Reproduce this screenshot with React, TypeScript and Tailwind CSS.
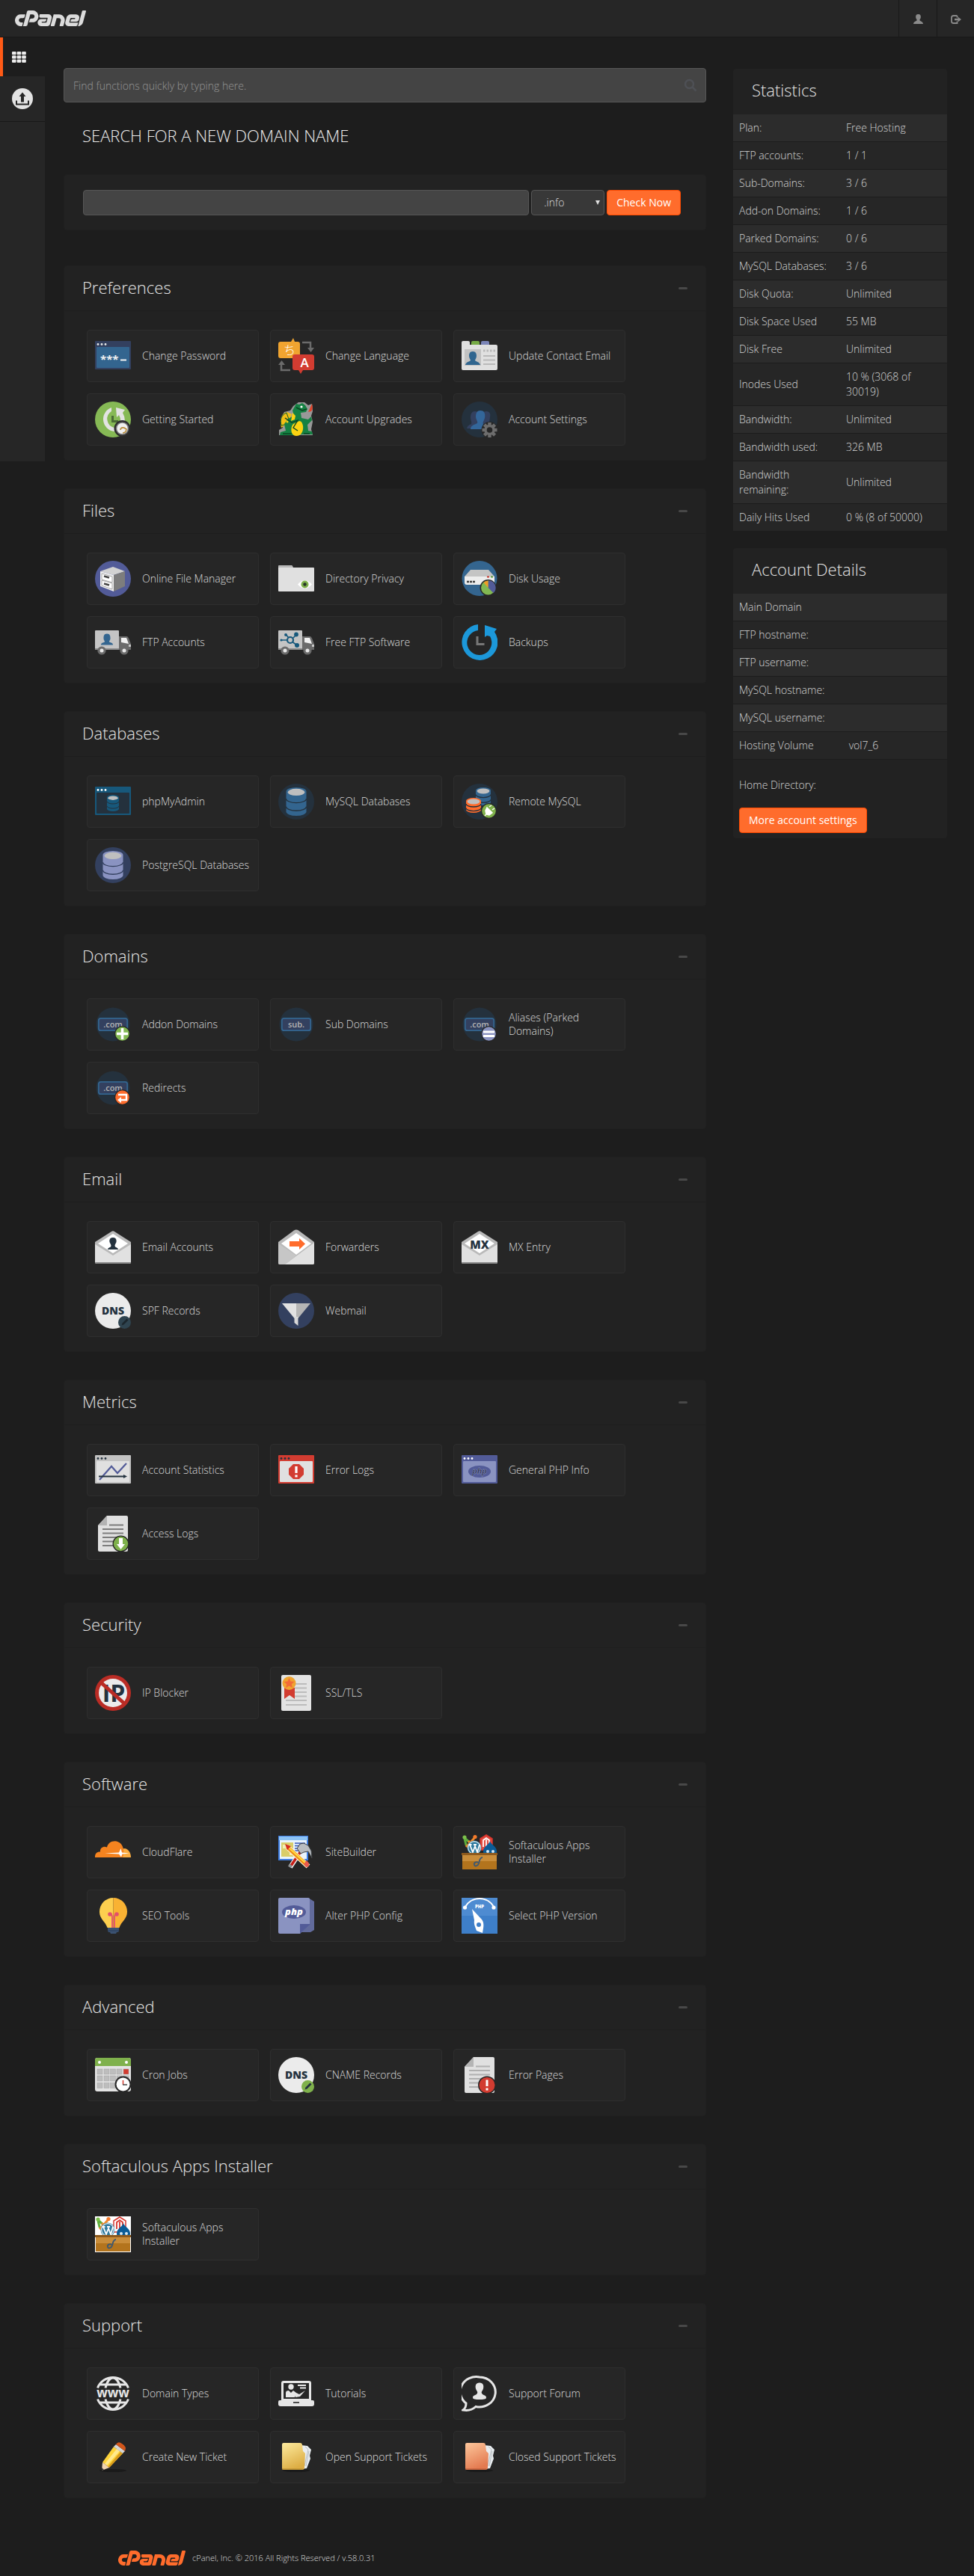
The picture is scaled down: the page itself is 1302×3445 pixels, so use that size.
import React, { useState } from "react";
import { SiCpanel } from "react-icons/si";

type Item = { label: string; icon: React.ReactNode };

const FONT = "'Open Sans', sans-serif";

function Ico({ children }: { children: React.ReactNode }) {
  return (
    <svg viewBox="0 0 48 48" className="size-12 shrink-0" aria-hidden="true" style={{ fontFamily: FONT }}>
      {children}
    </svg>
  );
}

function Disc({ fill }: { fill: string }) {
  return <circle cx="24" cy="24" r="24" fill={fill} />;
}

function Db({ x, y, w, h, fill, gap }: { x: number; y: number; w: number; h: number; fill: string; gap: string }) {
  const r = w / 2;
  const e = w / 5;
  const band = (t: number) => `M${x} ${y + t}a${r} ${e} 0 0 0 ${w} 0`;
  return (
    <g>
      <path d={`M${x} ${y + e}a${r} ${e} 0 0 1 ${w} 0v${h - 2 * e}a${r} ${e} 0 0 1 ${-w} 0z`} fill={fill} />
      <path d={`${band(h * 0.4)}${band(h * 0.68)}`} fill="none" stroke={gap} strokeWidth={w > 18 ? 1.3 : 1} />
      <ellipse cx={x + r} cy={y + e + 1} rx={r * 0.84} ry={e * 0.85} fill="#bfbfbf" />
    </g>
  );
}

function Window({ frame, inner, dots, children }: { frame: string; inner: string; dots: string; children: React.ReactNode }) {
  return (
    <Ico>
      <rect y="4" width="48" height="38" rx="1" fill={frame} />
      <rect x="2" y="12" width="44" height="28" rx="1" fill={inner} />
      <circle cx="4" cy="8.500" r="1.400" fill={dots} />
      <circle cx="9" cy="8.500" r="1.400" fill={dots} />
      <circle cx="14" cy="8.500" r="1.400" fill={dots} />
      {children}
    </Ico>
  );
}

function Truck({ children }: { children: React.ReactNode }) {
  return (
    <Ico>
      <path d="M1 8h30a1 1 0 0 1 1 1v25H0V9a1 1 0 0 1 1-1z" fill="#c4c4c4" />
      <path d="M32 16h10c2 0 3 2 4 5l2 5v8H32z" fill="#6b6b6b" />
      <path d="M35 18h7l3 8-10-2z" fill="#f1f1f1" />
      <path d="M45 27h3v3h-3z" fill="#c8c8c8" />
      <path d="M0 32h32v2H0z" fill="#8f8f8f" />
      {[9, 39].map((cx) => (
        <g key={cx}>
          <circle cx={cx} cy="35" r="5.600" fill="#6b6b6b" />
          <circle cx={cx} cy="35" r="2.500" fill="#e8e8e8" />
        </g>
      ))}
      {children}
    </Ico>
  );
}

function DomainBadge({ text, children }: { text: string; children?: React.ReactNode }) {
  return (
    <Ico>
      <circle cx="24" cy="24" r="22.500" fill="#24313d" />
      <rect x="4.800" y="15.800" width="38.400" height="16.400" rx="3" fill="#33405f" stroke="#33658f" strokeWidth="1.800" />
      <text x="24" y="28" textAnchor="middle" fontSize="11" fontWeight="600" fill="#b4b4b4">{text}</text>
      {children}
    </Ico>
  );
}

function Envelope({ children }: { children: React.ReactNode }) {
  return (
    <Ico>
      <path d="M0 17 22 3q2-1.500 4 0L48 17v26q0 2-2 2H2q-2 0-2-2z" fill="#b9b9b9" />
      <path d="M0 20l24 15 24-15v24q0 2-2 2H2q-2 0-2-2z" fill="#e1e1e1" />
      <path d="M4 19 24 6l20 13-20 13z" fill="#fff" />
      <path d="M0 44q0 2 2 2h44q2 0 2-2z" fill="#8a8a8a" />
      {children}
    </Ico>
  );
}

function Dns({ badge, mark }: { badge: string; mark: string }) {
  return (
    <Ico>
      <Disc fill="#ebebeb" />
      <text x="24" y="28.500" textAnchor="middle" fontSize="14" fontWeight="800" fill="#24323e">DNS</text>
      <circle cx="39.500" cy="39.500" r="8.500" fill={badge} />
      <path d="M35.500 43.500l1-3 6-6 2 2-6 6z" fill={mark} />
    </Ico>
  );
}

function Page({ line, children }: { line: string; children: React.ReactNode }) {
  return (
    <Ico>
      <path d="M16 0h26q2 0 2 2v44q0 2-2 2H6q-2 0-2-2V13z" fill="#e0e0e0" />
      <path d="M16 0v13H4z" fill="#b4b4b4" />
      <path d="M19 12.500h19M10 18h28M10 23.500h28M10 29h28M10 34.500h28M10 40h28" stroke={line} strokeWidth="2" />
      {children}
    </Ico>
  );
}

function CmsBox({ white }: { white?: boolean }) {
  return (
    <Ico>
      {white && <rect width="48" height="48" fill="#fff" />}
      <path d="M4 5l7 6 4 6M4 6l2 8 5 5" stroke="#5fae3d" strokeWidth="3" fill="none" />
      <path d="M18 4l-7 8-5 5M9 9l8 8" stroke="#f08a2b" strokeWidth="3" fill="none" />
      <circle cx="4" cy="4" r="2.600" fill="#7cc04b" />
      <circle cx="18" cy="3.500" r="2.600" fill="#f47a2c" />
      <path d="M25 6l8-5 8 5v15H25z" fill={white ? "#fff" : "#e04a3f"} stroke="#d8342c" strokeWidth="1.500" />
      <path d="M29 17V8l4-3 4 3v9M33 7v10" stroke={white ? "#d8342c" : "#fff"} strokeWidth="1.800" fill="none" />
      <circle cx="17" cy="18" r="9.500" fill="#2f7a9e" />
      <circle cx="17" cy="18" r="8.300" fill="none" stroke="#e8f2f7" strokeWidth="1.200" />
      <path d="M11 14l4 10 3-8 3 8 3-10M9.500 14h4M16 14h4" stroke="#fff" strokeWidth="1.800" fill="none" />
      <path d="M38 9c1 5 9 7 9 14 0 5-4 7-9 7s-9-2-9-7c0-7 8-9 9-14z" fill="#0b5c97" />
      <circle cx="35" cy="23" r="2" fill="#d7e9f5" />
      <circle cx="42" cy="23" r="2" fill="#d7e9f5" />
      <path d="M1 26h46v21H1z" fill="#c98d3a" />
      <path d="M1 36h46v11H1z" fill="#b3741d" />
      <path d="M0 25h48v3H0z" fill="#8e5a1d" />
      <path d="M28 31c-4 0-4 5-5 8s-5 5-6 2 3-5 5-3" stroke="#3b5873" strokeWidth="1.800" fill="none" />
    </Ico>
  );
}

function Folder({ id, a, b, c }: { id: string; a: string; b: string; c: string }) {
  return (
    <Ico>
      <defs>
        <linearGradient id={id} x1="0" y1="0" x2="0.400" y2="1">
          <stop offset="0" stopColor={a} />
          <stop offset="1" stopColor={b} />
        </linearGradient>
      </defs>
      <ellipse cx="24" cy="42" rx="18" ry="2" fill="#1a1a1a" />
      <path d="M30 8l9 1 5 5-2 8 1 4-5 13-8 1z" fill="#e9edf0" />
      <path d="M36 10l4 4-2 8-3 14M41 16l-4 20" stroke="#b8bec2" strokeWidth="1" fill="none" />
      <path d="M7 5h22q3 0 3 3l1 8 3 3-1 19q0 3-3 3H7q-2 0-2-2V7q0-2 2-2z" fill={`url(#${id})`} />
      <path d="M5 40h28" stroke={c} strokeWidth="1.200" />
    </Ico>
  );
}

const gearTeeth = [0, 45, 90, 135, 180, 225, 270, 315];

const sections: { title: string; items: Item[] }[] = [
  {
    title: "Preferences",
    items: [
      {
        label: "Change Password",
        icon: (
          <Window frame="#33405f" inner="#33658f" dots="#e8e8e8">
            <text x="7" y="34" fontSize="15" fontWeight="700" fill="#f2f2f2">***</text>
            <path d="M34 29.500h8" stroke="#f2f2f2" strokeWidth="2" />
          </Window>
        ),
      },
      {
        label: "Change Language",
        icon: (
          <Ico>
            <path d="M3 5h14l3-5 2 5h4q3 0 3 3v16q0 3-3 3H3q-3 0-3-3V8q0-3 3-3z" fill="#f0a430" />
            <path d="M22 22h23q3 0 3 3v15q0 3-3 3H33l-3 5-3-5h-5q-3 0-3-3V25q0-3 3-3z" fill="#d23c31" />
            <text x="15" y="22" textAnchor="middle" fontSize="16" fill="#fff" style={{ fontFamily: "'Noto Sans CJK JP', sans-serif" }}>ち</text>
            <text x="35" y="39" textAnchor="middle" fontSize="17" fontWeight="600" fill="#fff">A</text>
            <path d="M32 6h11v8M16 43H4V34" stroke="#6b6b6b" strokeWidth="2.500" fill="none" />
            <path d="M39 13h9l-4.500 6zM0 36h9l-4.500-6z" fill="#6b6b6b" />
          </Ico>
        ),
      },
      {
        label: "Update Contact Email",
        icon: (
          <Ico>
            <path d="M13 9V6q0-2 2-2h7q2 0 2 2v3z" fill="#76ab45" />
            <path d="M26 9V6q0-2 2-2h7q2 0 2 2v3z" fill="#7b85b8" />
            <path d="M0 6q0-2 2-2h7q2 0 2 2v3h35q2 0 2 2v30q0 2-2 2H2q-2 0-2-2z" fill="#e0e0e0" />
            <path d="M4 15h22v22H4z" fill="#c2c2c2" />
            <path d="M15 18c4 0 5 3 5 6s-2 5-2 6c2 2 6 2 7 6H5c1-4 5-4 7-6 0-1-2-3-2-6s1-6 5-6z" fill="#2f658f" />
            <path d="M29 17h16" stroke="#b9b9b9" strokeWidth="3" strokeDasharray="2.500 2" />
            <path d="M29 24h16M29 29.500h16M29 35h16" stroke="#b9b9b9" strokeWidth="2" />
          </Ico>
        ),
      },
      {
        label: "Getting Started",
        icon: (
          <Ico>
            <Disc fill="#86b955" />
            <path d="M22 8v5a12 12 0 0 0 4 22v5A16.500 16.500 0 0 1 22 8z" fill="#e3e3e3" />
            <path d="M28 8l12 3-3 4q3 5 3 11h-6q0-5-2-8l-3 3z" fill="#e3e3e3" />
            <path d="M22 19h3v6h6v3h-9z" fill="#4b6b35" />
            <circle cx="36.500" cy="36" r="11" fill="#2b2b2b" />
            <circle cx="36.500" cy="36" r="8" fill="#efefef" stroke="#777" strokeWidth="1.500" />
            <path d="M34 38c0-4 6-4 7-1M37 42c4 0 5-3 5-6" stroke="#b98d3c" strokeWidth="1.600" fill="none" />
          </Ico>
        ),
      },
      {
        label: "Account Upgrades",
        icon: (
          <Ico>
            <path d="M27 1h8l5 4 5-2 1 10-2 6 2 8-2 10 2 8H1v-7l5-3-3-12 5-9 8-2 4-6z" fill="#b5b5b5" opacity=".8" />
            <path d="M12 14c-9 2-10 12-8 21l8-6 6-12z" fill="#f2bf16" />
            <path d="M4 32c-2-8 0-14 7-17l5 14z" fill="none" stroke="#0d5b2c" strokeWidth="1" />
            <path d="M40 14l5-11q2 7-1 10z" fill="#e0442a" />
            <path d="M24 3l4 1 4-2 4 3 3 5-2 4-7 1 1 7 9 2 4-4 1 5-6 6 1 8 5 1 1 4H33l-14 1H2l1-4 7-2-2-9 5-7 8-4-2-7z" fill="#158143" />
            <path d="M28 26c7 0 8 20-4 20-8 0-8-12-4-16z" fill="#fbd312" />
            <path d="M9 22l9 6 8-3-6 10 6 4M24 8l8 4 6-2M6 43h12M34 43h8" stroke="#0a4422" strokeWidth="1.400" fill="none" />
            <path d="M19 15l4 4-1 5-5 2z" fill="#fbd312" />
            <circle cx="31" cy="7" r="1.600" fill="#fff" />
            <circle cx="12" cy="27" r="1.500" fill="#fbd312" />
          </Ico>
        ),
      },
      {
        label: "Account Settings",
        icon: (
          <Ico>
            <Disc fill="#24313d" />
            <path d="M18 13c5 0 6 4 5 8l-2 6v4l-3 5H7c1-4 4-5 6-6 1-3-1-5-1-9 0-5 2-8 6-8zM33 13c5 0 6 4 5 8l-1 7-8 2-2-10c0-4 2-7 6-7z" fill="#33405f" />
            <path d="M25 12c6 0 7 5 6 10-1 4-3 5-2 8l-2 7H12c0-5 5-6 9-8 1-3-2-5-2-9 0-5 2-8 6-8z" fill="#33669a" />
            <g transform="translate(37.500 38)" fill="#6d6d6d">
              <circle r="11" fill="#262626" />
              {gearTeeth.map((a) => (
                <rect key={a} x="-2.200" y="-10" width="4.400" height="6" transform={`rotate(${a})`} />
              ))}
              <circle r="7.200" />
              <circle r="3.800" fill="#262626" />
            </g>
          </Ico>
        ),
      },
    ],
  },
  {
    title: "Files",
    items: [
      {
        label: "Online File Manager",
        icon: (
          <Ico>
            <Disc fill="#525b98" />
            <path d="M7 14l17-6 16 6-15 5z" fill="#d2d2d2" />
            <path d="M7 14l18 5v22L7 34z" fill="#efefef" />
            <path d="M40 14l-15 5v22l15-7z" fill="#7d7d7d" />
            <path d="M9 17l14 4v8L9 25zM9 26l14 4v8L9 33z" fill="#fff" stroke="#a8a8a8" />
            <path d="M12 20.500l7 2M12 30.500l7 2" stroke="#444" strokeWidth="2.600" />
          </Ico>
        ),
      },
      {
        label: "Directory Privacy",
        icon: (
          <Ico>
            <path d="M0 7q0-1 1-1h17q1 0 2 3v3H0z" fill="#b9b9b9" />
            <path d="M0 9h47q1 0 1 1v30q0 1-1 1H1q-1 0-1-1z" fill="#e0e0e0" />
            <path d="M26 31.500c6-7 13-7 19 0-6 7-13 7-19 0z" fill="#fff" />
            <circle cx="35.500" cy="31.500" r="5" fill="#7fb14c" />
            <circle cx="35.500" cy="31.500" r="2.200" fill="#26332a" />
          </Ico>
        ),
      },
      {
        label: "Disk Usage",
        icon: (
          <Ico>
            <circle cx="24" cy="23.500" r="23.500" fill="#34658f" />
            <path d="M12 12h24l8 9H4z" fill="#c4c4c4" />
            <path d="M4 21h40v11H7q-3 0-3-3z" fill="#ededed" />
            <path d="M7 28h3M11 28h3M15 28h3" stroke="#3f3f3f" strokeWidth="2.500" />
            <path d="M34 21.500h3" stroke="#c9392f" strokeWidth="2" />
            <path d="M39 21.500h3" stroke="#5a9a3b" strokeWidth="2" />
            <circle cx="35.500" cy="36" r="11" fill="#262626" />
            <circle cx="35.500" cy="36" r="9.500" fill="#82b852" />
            <path d="M35.500 36V26.500A9.500 9.500 0 0 1 42.500 43z" fill="#525b98" />
            <path d="M35.500 36V26.500A9.500 9.500 0 0 0 29.500 29z" fill="#f09b27" />
          </Ico>
        ),
      },
      {
        label: "FTP Accounts",
        icon: (
          <Truck>
            <path d="M16 12.500c4 0 4.500 3 4.500 6s-1.500 3-1.500 5c2 1 5 1 5 4H8c0-3 3-3 5-4 0-2-1.500-2-1.500-5s.5-6 4.500-6z" fill="#33658f" />
          </Truck>
        ),
      },
      {
        label: "Free FTP Software",
        icon: (
          <Truck>
            <path d="M4 21h9M16 21l-6-8M17 21l7-7M17 22l8 6" stroke="#17587b" strokeWidth="1.600" />
            <circle cx="16" cy="21" r="4" fill="#c4c4c4" stroke="#17587b" strokeWidth="2.200" />
            <circle cx="4" cy="21" r="1.600" fill="#17587b" />
            <circle cx="10" cy="14" r="1.900" fill="#17587b" />
            <circle cx="24" cy="13.500" r="2.900" fill="#17587b" />
            <circle cx="25" cy="28" r="3" fill="#17587b" />
          </Truck>
        ),
      },
      {
        label: "Backups",
        icon: (
          <Ico>
            <path d="M22 0v8A16.500 16.500 0 1 0 38 16l-4-1-3 2V1l16 5-3 4A24 24 0 1 1 22 0z" fill="#1c98da" />
            <path d="M19.500 16h3v9h8v3h-11z" fill="#777" />
          </Ico>
        ),
      },
    ],
  },
  {
    title: "Databases",
    items: [
      {
        label: "phpMyAdmin",
        icon: (
          <Window frame="#17587b" inner="#24313d" dots="#fff">
            <Db x={16} y={15} w={16} h={22} fill="#17587b" gap="#24313d" />
          </Window>
        ),
      },
      {
        label: "MySQL Databases",
        icon: (
          <Ico>
            <Disc fill="#24313d" />
            <Db x={10.5} y={5} w={27} h={38} fill="#33658f" gap="#24313d" />
          </Ico>
        ),
      },
      {
        label: "Remote MySQL",
        icon: (
          <Ico>
            <Disc fill="#24313d" />
            <Db x={19} y={5} w={20} h={24} fill="#33658f" gap="#24313d" />
            <Db x={6} y={19} w={20} h={20} fill="#ff6c2c" gap="#24313d" />
            <circle cx="36.500" cy="36.500" r="10.500" fill="#262626" />
            <circle cx="36.500" cy="36.500" r="9.300" fill="#7fb14c" />
            <path d="M31 43l3-3M37 31l3-2M41 35l3-2M34 32l7 7-4 3-4-1-1-5z" fill="#fff" stroke="#fff" strokeWidth="1.500" />
          </Ico>
        ),
      },
      {
        label: "PostgreSQL Databases",
        icon: (
          <Ico>
            <Disc fill="#33405f" />
            <Db x={10.5} y={5} w={27} h={38} fill="#8a93c1" gap="#33405f" />
          </Ico>
        ),
      },
    ],
  },
  {
    title: "Domains",
    items: [
      {
        label: "Addon Domains",
        icon: (
          <DomainBadge text=".com">
            <circle cx="36.500" cy="36.500" r="10.500" fill="#262626" />
            <circle cx="36.500" cy="36.500" r="9.300" fill="#82b852" />
            <path d="M36.500 29v15M29 36.500h15" stroke="#fff" strokeWidth="3.600" />
          </DomainBadge>
        ),
      },
      { label: "Sub Domains", icon: <DomainBadge text="sub." /> },
      {
        label: "Aliases (Parked Domains)",
        icon: (
          <DomainBadge text=".com">
            <circle cx="36.500" cy="36.500" r="10.500" fill="#262626" />
            <circle cx="36.500" cy="36.500" r="9.300" fill="#8a93c1" />
            <path d="M29 34h15M29 39.500h15" stroke="#fff" strokeWidth="3" />
          </DomainBadge>
        ),
      },
      {
        label: "Redirects",
        icon: (
          <DomainBadge text=".com">
            <circle cx="36.500" cy="36.500" r="10.500" fill="#262626" />
            <circle cx="36.500" cy="36.500" r="9.300" fill="#ff6c2c" />
            <path d="M31 33h11v7H34" stroke="#fff" strokeWidth="2.400" fill="none" />
            <path d="M35 36v8l-5-4z" fill="#fff" />
          </DomainBadge>
        ),
      },
    ],
  },
  {
    title: "Email",
    items: [
      {
        label: "Email Accounts",
        icon: (
          <Envelope>
            <path d="M24 11c4 0 5 3 4.500 6-.5 2-2 3-2 5 .5 3 4.500 2 4.500 5H17c0-3 4-2 4.500-5 0-2-1.500-3-2-5-.5-3 .5-6 4.500-6z" fill="#24323e" />
          </Envelope>
        ),
      },
      {
        label: "Forwarders",
        icon: (
          <Ico>
            <path d="M0 17 21 1.500q3-2 6 0L48 17v28q0 2-2 2H2q-2 0-2-2z" fill="#b9b9b9" />
            <path d="M0 19l24 16L9 47H2q-2 0-2-2z" fill="#c6c6c6" />
            <path d="M48 18L9 47h37q2 0 2-2z" fill="#e1e1e1" />
            <path d="M4 19 24 5l20 14-20 15z" fill="#fff" />
            <path d="M15 16h13v-4l8 7.500-8 7.500v-4H15z" fill="#ff6c2c" />
          </Ico>
        ),
      },
      {
        label: "MX Entry",
        icon: (
          <Envelope>
            <text x="24" y="25.500" textAnchor="middle" fontSize="15" fontWeight="800" fill="#24323e">MX</text>
          </Envelope>
        ),
      },
      { label: "SPF Records", icon: <Dns badge="#2f4450" mark="#1c262d" /> },
      {
        label: "Webmail",
        icon: (
          <Ico>
            <Disc fill="#33405f" />
            <path d="M5 14h19v20h-2.500z" fill="#e1e1e1" />
            <path d="M24 14h19L26.500 34H24z" fill="#b5b5b5" />
            <path d="M21.500 32h5v12l-5-4z" fill="#d8d8d8" />
          </Ico>
        ),
      },
    ],
  },
  {
    title: "Metrics",
    items: [
      {
        label: "Account Statistics",
        icon: (
          <Window frame="#c2c2c2" inner="#e0e0e0" dots="#24323e">
            <path d="M6 37L22 19l8 9 12-13" stroke="#525b98" strokeWidth="2.200" fill="none" />
            <path d="M5 32.500h34" stroke="#24323e" strokeWidth="2" />
            <path d="M38 30l5 2.500-5 2.500z" fill="#24323e" />
          </Window>
        ),
      },
      {
        label: "Error Logs",
        icon: (
          <Window frame="#d23c31" inner="#e0e0e0" dots="#24323e">
            <path d="M20 16h8l6 6v8l-6 6h-8l-6-6v-8z" fill="#d23c31" />
            <path d="M24 19v9M24 30.500v3" stroke="#fff" strokeWidth="3.200" />
          </Window>
        ),
      },
      {
        label: "General PHP Info",
        icon: (
          <Window frame="#525b98" inner="#8a93c1" dots="#fff">
            <ellipse cx="24" cy="26" rx="15" ry="8" fill="#525b98" />
            <text x="24" y="29" textAnchor="middle" fontSize="11" fontWeight="700" fontStyle="italic" fill="#222844" stroke="#a0a7cb" strokeWidth="0.400">php</text>
          </Window>
        ),
      },
      {
        label: "Access Logs",
        icon: (
          <Page line="#7d7d7d">
            <circle cx="34.500" cy="37.500" r="11" fill="#262626" />
            <circle cx="34.500" cy="37.500" r="9.700" fill="#7fb14c" />
            <path d="M32 30h5v8h3l-5.500 7-5.500-7h3z" fill="#fff" />
          </Page>
        ),
      },
    ],
  },
  {
    title: "Security",
    items: [
      {
        label: "IP Blocker",
        icon: (
          <Ico>
            <Disc fill="#ba2c25" />
            <circle cx="24" cy="24" r="19" fill="#ebebeb" />
            <text x="25" y="36" textAnchor="middle" fontSize="32" fontWeight="700" fill="#24323e">IP</text>
            <path d="M9 11l30 27" stroke="#ba2c25" strokeWidth="5" />
          </Ico>
        ),
      },
      {
        label: "SSL/TLS",
        icon: (
          <Ico>
            <rect x="4" width="40" height="48" rx="2" fill="#e3e3e3" />
            <path d="M22 12h16M22 17.500h16M22 23h16M22 28.500h16M10 34h28M10 40h28" stroke="#bcbcbc" strokeWidth="2" />
            <path d="M8 17h14v15l-7-5-7 5z" fill="#d23c31" />
            <circle cx="14.500" cy="11" r="9" fill="#f0a430" />
            <path d="M14.500 4l2 4.500 5 .5-3.700 3.200 1.200 5-4.500-2.700-4.500 2.700 1.200-5L7.500 9l5-.5z" fill="#f26a38" />
          </Ico>
        ),
      },
    ],
  },
  {
    title: "Software",
    items: [
      {
        label: "CloudFlare",
        icon: (
          <Ico>
            <path d="M36 31V20q1-1 4-1c5 1 8 6 8 12z" fill="#fbad41" />
            <path d="M0 31c-.5-5 3-8 7-7.500-.5-5 4-8 9-6 1-6 7-9.500 13-8 5 1.500 8 5 9 11q1 5-1 10.500z" fill="#f5831f" />
            <path d="M13 25.500l19-1 2.500-5.500 1.500 5.500 10 1-9.500 1-1.500 4-3-4z" fill="#fff" />
          </Ico>
        ),
      },
      {
        label: "SiteBuilder",
        icon: (
          <Ico>
            <rect x="1" y="3" width="38" height="31" fill="#e8f4fd" stroke="#3f7de0" strokeWidth="2" />
            <path d="M1 3h38v5H1z" fill="#8cc3f5" />
            <path d="M4 11h16v19H4z" fill="#d9cd6a" />
            <path d="M6 14h7v5H6zM15 22h3v6h-3z" fill="#f2eeb4" />
            <path d="M22 12h14M22 15.500h14M22 19h10M22 22h8" stroke="#3456b8" strokeWidth="1.400" />
            <path d="M16 44L32 20" stroke="#f2f2f2" strokeWidth="6" />
            <path d="M17 42L30 23" stroke="#c61e17" strokeWidth="3.600" />
            <path d="M15 44l2-3" stroke="#8d9194" strokeWidth="4.500" />
            <path d="M25 19l4-6 5-1 6 3 4 7 1 10-5-9-6 1-4 2z" fill="#b9bdc1" stroke="#3e4245" strokeWidth="1" />
            <path d="M12 17l28 26" stroke="#fff3d0" strokeWidth="7" />
            <path d="M12 17l26 24" stroke="#f08a14" strokeWidth="5" />
            <path d="M12 16l25 23" stroke="#ffdc45" strokeWidth="2" />
            <path d="M9 13l8 3-5 5z" fill="#d42a1d" />
            <path d="M34 40l4-5 3 4q1 5-4 5z" fill="#e8594b" />
          </Ico>
        ),
      },
      { label: "Softaculous Apps Installer", icon: <CmsBox /> },
      {
        label: "SEO Tools",
        icon: (
          <Ico>
            <path d="M24.500 0A18.500 18.500 0 0 0 6 19c0 9 8 13 10.500 21h8z" fill="#fdcf4f" />
            <path d="M24.500 0A18.500 18.500 0 0 1 43 19c0 9-8 13-10.500 21h-8z" fill="#f9b233" />
            <circle cx="20" cy="22" r="2.800" fill="#e4506a" />
            <circle cx="29" cy="22" r="2.800" fill="#e4506a" />
            <path d="M20 22q3 0 3 4v14M29 22q-3 0-3 4v14" stroke="#e4506a" strokeWidth="1.800" fill="none" />
            <path d="M17 40h15v4q0 2-3 2l-1 2h-7l-1-2q-3 0-3-2z" fill="#3b5272" />
            <path d="M17 44h15" stroke="#2a3d58" />
          </Ico>
        ),
      },
      {
        label: "Alter PHP Config",
        icon: (
          <Ico>
            <path d="M40 0l8 5v38l-5 3H30z" fill="#626b9c" />
            <path d="M2 0h38q2 0 2 2v33L29 48H2q-2 0-2-2V2q0-2 2-2z" fill="#8a93c1" />
            <path d="M43 35H29v13z" fill="#525b98" />
            <ellipse cx="21" cy="19" rx="16" ry="9" fill="#525b98" />
            <text x="21" y="23" textAnchor="middle" fontSize="13" fontWeight="800" fontStyle="italic" fill="#fff">php</text>
          </Ico>
        ),
      },
      {
        label: "Select PHP Version",
        icon: (
          <Ico>
            <rect width="48" height="48" fill="#3e7fc9" />
            <rect width="48" height="24" fill="#5590d4" opacity=".7" />
            <path d="M5 12a22 22 0 0 1 38 0" stroke="#fff" strokeWidth="2" fill="none" />
            <circle cx="4.500" cy="13" r="2.600" fill="#fff" />
            <circle cx="43" cy="13" r="2.600" fill="#fff" />
            <text x="24" y="13.500" textAnchor="middle" fontSize="6" fontWeight="800" fill="#fff">PHP</text>
            <path d="M14 15l13 14c4 5 2 12 1 18l-8-3c-1-4-4-8-3-14z" fill="#fff" />
            <circle cx="23" cy="36" r="3" fill="#3e7fc9" />
          </Ico>
        ),
      },
    ],
  },
  {
    title: "Advanced",
    items: [
      {
        label: "Cron Jobs",
        icon: (
          <Ico>
            <rect y="1" width="48" height="45" rx="3" fill="#e3e3e3" />
            <path d="M0 12V4q0-3 3-3h42q3 0 3 3v8z" fill="#7fb14c" />
            <circle cx="6" cy="7" r="2" fill="#fff" />
            <circle cx="42" cy="7" r="2" fill="#fff" />
            {[16, 25, 34.5].map((y) =>
              [3, 12, 20.5, 29, 38].map((x) => (
                <rect key={`${x}-${y}`} x={x} y={y} width="7" height="7" fill={x === 38 && y === 16 ? "#d23c31" : "#bdbdbd"} stroke="#a3a3a3" strokeWidth="0.500" />
              )),
            )}
            <circle cx="37.500" cy="36.500" r="11" fill="#262626" />
            <circle cx="37.500" cy="36.500" r="9" fill="#fff" />
            <path d="M37.500 31v6" stroke="#d23c31" strokeWidth="1.500" />
            <path d="M37 37h6" stroke="#444" strokeWidth="1.500" />
          </Ico>
        ),
      },
      { label: "CNAME Records", icon: <Dns badge="#7fb14c" mark="#24323e" /> },
      {
        label: "Error Pages",
        icon: (
          <Page line="#b0b0b0">
            <circle cx="34" cy="37.500" r="12" fill="#262626" />
            <circle cx="34" cy="37.500" r="10.500" fill="#d23c31" />
            <path d="M34 30.500v8.500M34 41.500v3" stroke="#fff" strokeWidth="3" />
          </Page>
        ),
      },
    ],
  },
  {
    title: "Softaculous Apps Installer",
    items: [{ label: "Softaculous Apps Installer", icon: <CmsBox white /> }],
  },
  {
    title: "Support",
    items: [
      {
        label: "Domain Types",
        icon: (
          <Ico>
            <g stroke="#e6e6e6" strokeWidth="3" fill="none">
              <path d="M3.500 16.500A22 22 0 0 1 44.500 16.500M3.500 31.500A22 22 0 0 0 44.500 31.500" />
              <path d="M14 16.500C16 8 20 3 24 3s8 5 10 13.500M14 31.500C16 40 20 45 24 45s8-5 10-13.500" />
              <path d="M7 12h34M7 36h34" />
            </g>
            <text x="24" y="28.500" textAnchor="middle" fontSize="17" fontWeight="700" fill="#e6e6e6">www</text>
          </Ico>
        ),
      },
      {
        label: "Tutorials",
        icon: (
          <Ico>
            <path d="M7 7h34q3 0 3 3v23H4V10q0-3 3-3z" fill="#e6e6e6" />
            <rect x="7" y="10" width="34" height="21" fill="#262626" />
            <path d="M0 35q0-2 2-2h44q2 0 2 2v3q0 3-3 3H3q-3 0-3-3z" fill="#e6e6e6" />
            <path d="M20 36h8" stroke="#262626" strokeWidth="1.600" />
            <circle cx="17" cy="15" r="3.700" fill="#e6e6e6" />
            <path d="M10 29v-6q0-3 4-3l3 3 3-3 4 3 4 2 8-5-7 8-6 1v-2l-1 2z" fill="#e6e6e6" />
            <path d="M26 13h11M29 16.500h8" stroke="#e6e6e6" strokeWidth="1.800" />
          </Ico>
        ),
      },
      {
        label: "Support Forum",
        icon: (
          <Ico>
            <path d="M24 2a21.500 20 0 1 1-5 39.500C14 46 7 47 2 46c3-2 4-5 4-9A21.500 20 0 0 1 24 2z" fill="none" stroke="#e6e6e6" strokeWidth="3" />
            <path d="M24 9.500c5 0 6 4 5 8-1 3-3 4-2 6 1 3 6 2 6 6 0 2-4 2.500-9 2.500s-9-.5-9-2.500c0-4 5-3 6-6 1-2-1-3-2-6-1-4 0-8 5-8z" fill="#e6e6e6" />
          </Ico>
        ),
      },
      {
        label: "Create New Ticket",
        icon: (
          <Ico>
            <ellipse cx="24" cy="42" rx="18" ry="2" fill="#1a1a1a" />
            <path d="M25 10l12 9-18 19-9-7z" fill="#fdd33a" />
            <path d="M29 13l4 3-17 19-3-2z" fill="#ffe98c" />
            <path d="M34 17l3 2-18 19-2-1z" fill="#d99b1a" />
            <path d="M10 31l9 7-10 4z" fill="#f0d3b0" />
            <path d="M9 38l3 3-3 1z" fill="#333" />
            <path d="M25 10l3-3 12 9-3 3z" fill="#d5d5d5" />
            <path d="M28 7q3-5 8-1 7 4 4 10z" fill="#d2561b" />
          </Ico>
        ),
      },
      { label: "Open Support Tickets", icon: <Folder id="folder-open" a="#fdeb9e" b="#ddae45" c="#b98d2e" /> },
      { label: "Closed Support Tickets", icon: <Folder id="folder-closed" a="#fdc79c" b="#e37a50" c="#bb5b36" /> },
    ],
  },
];

const stats = [
  ["Plan:", "Free Hosting"],
  ["FTP accounts:", "1 / 1"],
  ["Sub-Domains:", "3 / 6"],
  ["Add-on Domains:", "1 / 6"],
  ["Parked Domains:", "0 / 6"],
  ["MySQL Databases:", "3 / 6"],
  ["Disk Quota:", "Unlimited"],
  ["Disk Space Used", "55 MB"],
  ["Disk Free", "Unlimited"],
  ["Inodes Used", "10 % (3068 of 30019)"],
  ["Bandwidth:", "Unlimited"],
  ["Bandwidth used:", "326 MB"],
  ["Bandwidth remaining:", "Unlimited"],
  ["Daily Hits Used", "0 % (8 of 50000)"],
];

const details = [
  ["Main Domain", ""],
  ["FTP hostname:", ""],
  ["FTP username:", ""],
  ["MySQL hostname:", ""],
  ["MySQL username:", ""],
  ["Hosting Volume", "\u00a0vol7_6"],
];

function InfoTable({ rows }: { rows: string[][] }) {
  return (
    <table className="w-full table-fixed border-collapse text-sm leading-5 text-[#d6d6d6]">
      <tbody>
        {rows.map(([k, v]) => (
          <tr key={k} className="border-b border-[#1c1c1c] bg-[#262626] odd:bg-[#2c2c2c]">
            <th scope="row" className="p-2 text-left align-middle font-light">{k}</th>
            <td className="p-2 align-middle">{v}</td>
          </tr>
        ))}
      </tbody>
    </table>
  );
}

function Section({ title, items }: { title: string; items: Item[] }) {
  const [open, setOpen] = useState(true);
  return (
    <section className="rounded border border-[#202020] bg-[#222222]">
      <header className="flex h-[60px] items-center justify-between border-b border-[#1e1e1e] px-6">
        <h2 className="pb-1 text-[22px] leading-7 text-[#e6e6e6]">{title}</h2>
        <button
          type="button"
          aria-label={`Toggle ${title}`}
          aria-expanded={open}
          onClick={() => setOpen(!open)}
          className="flex h-6 w-3 items-center"
        >
          <span className="h-[3px] w-3 rounded-sm bg-[#484848]" />
        </button>
      </header>
      {open && (
        <ul className="flex flex-wrap gap-[15px] px-[30px] pt-[25px] pb-[19px]">
          {items.map((it) => (
            <li key={it.label}>
              <a
                href="#"
                className="flex h-[70px] w-[230px] items-center gap-[15px] rounded-sm border border-[#2e2e2e] bg-[#262626] px-2.5 text-sm leading-[18px] text-[#dcdcdc]"
              >
                {it.icon}
                <span>{it.label}</span>
              </a>
            </li>
          ))}
        </ul>
      )}
    </section>
  );
}

export default function App() {
  return (
    <div className="flex min-h-screen flex-col bg-[#1d1d1d] font-['Open_Sans',sans-serif] text-sm font-light text-[#cccccc]">
      <header className="flex h-[50px] items-stretch justify-between border-b border-[#191919] bg-[#262626]">
        <a href="#" aria-label="cPanel" className="flex items-center pl-5">
          <SiCpanel viewBox="0 9.350 24 5.300" className="h-[21px] w-[95px] text-[#dcdcdc]" />
        </a>
        <nav className="flex">
          <a href="#" aria-label="Account" className="flex w-[51px] items-center justify-center border-l border-[#191919] pt-0.5">
            <svg viewBox="0 0 14 14" className="size-[13px] fill-[#8a8a8a]" aria-hidden="true">
              <path d="M7 0c3 0 4 2 3.500 5-.3 1.500-1.500 2-1.500 3.500 0 1.500 5 1.500 5 5.500H0c0-4 5-4 5-5.500C5 7 3.800 6.500 3.500 5 3 2 4 0 7 0z" />
            </svg>
          </a>
          <a href="#" aria-label="Log out" className="flex w-[50px] items-center justify-center border-l border-[#191919] pt-0.5">
            <svg viewBox="0 0 14 12" width="14" height="12" aria-hidden="true">
              <path d="M8.500 1H3.500Q1 1 1 3.500v5Q1 11 3.500 11h5V8.500M8.500 3.500V1" fill="none" stroke="#8a8a8a" strokeWidth="1.800" />
              <path d="M5 4.800h4.500V2.500L14 6 9.500 9.500V7.200H5z" fill="#8a8a8a" />
            </svg>
          </a>
        </nav>
      </header>

      <div className="flex items-start pr-9">
        <nav className="mr-[25px] flex w-[60px] shrink-0 flex-col bg-[#262626] pb-[454px]">
          <a href="#" aria-label="Home" className="flex h-[52px] items-center border-l-4 border-[#ff5a16] bg-[#1d1d1d] pl-3">
            <svg viewBox="0 0 19 15" className="h-[15px] w-[19px] fill-[#ededed]" aria-hidden="true">
              {[0, 5.2, 10.4].map((y) =>
                [0, 6.6, 13.2].map((x) => <rect key={`${x}-${y}`} x={x} y={y} width="5.600" height="4.300" rx="1" />),
              )}
            </svg>
          </a>
          <a href="#" aria-label="Upgrades" className="flex h-[61px] items-center border-b border-[#191919] pl-4">
            <svg viewBox="0 0 28 28" className="size-7" aria-hidden="true">
              <circle cx="14" cy="14" r="14" fill="#e3e3e3" />
              <path d="M14 5.500l4.500 5.500H16v7.500h-4V11H9.500z" fill="#262626" />
              <path d="M6 16.500v5h16v-5" fill="none" stroke="#262626" strokeWidth="2" />
            </svg>
          </a>
        </nav>

        <main className="mr-9 min-w-0 flex-1 pt-[41px]">
          <div className="relative">
            <input
              type="search"
              aria-label="Find functions"
              placeholder="Find functions quickly by typing here."
              className="h-[46px] w-full rounded border border-[#565656] bg-[#444444] px-3 text-sm font-light text-[#cccccc] placeholder:text-[#969696]"
            />
            <svg viewBox="0 0 18 18" className="absolute top-[14px] right-3 size-[18px]" fill="none" stroke="#4e5055" strokeWidth="2.500" aria-hidden="true">
              <circle cx="7.500" cy="7.500" r="5.500" />
              <path d="M11.500 11.500l5 5" />
            </svg>
          </div>

          <h1 className="mt-[30px] px-[25px] text-[22px] leading-7 text-[#eeeeee]">SEARCH FOR A NEW DOMAIN NAME</h1>

          <form
            className="mt-[38px] flex h-[75px] items-center rounded border border-[#202020] bg-[#222222] pr-[33px] pl-[25px]"
            onSubmit={(e) => e.preventDefault()}
          >
            <input
              type="text"
              aria-label="Domain name"
              className="h-[34px] min-w-0 flex-1 rounded border border-[#565656] bg-[#444444] px-3"
            />
            <span className="relative ml-[3px]">
              <select
                aria-label="Extension"
                className="h-[34px] w-[98px] appearance-none rounded border border-[#565656] bg-[#383838] px-4 text-sm font-light text-[#dddddd]"
                defaultValue=".info"
              >
                <option>.info</option>
              </select>
              <span className="pointer-events-none absolute top-[14px] right-1.5 border-x-3 border-t-6 border-x-transparent border-t-[#e0e0e0]" />
            </span>
            <button
              type="submit"
              className="ml-[3px] h-[34px] rounded-sm border border-[#ff4a00] bg-[#ff6c2c] px-3 text-sm font-medium text-white"
            >
              Check Now
            </button>
          </form>

          <div className="mt-[47px] flex flex-col gap-[37px]">
            {sections.map((s) => (
              <Section key={s.title} {...s} />
            ))}
          </div>
        </main>

        <aside className="flex w-[286px] shrink-0 flex-col gap-[22px] pt-[42px]">
          <section className="rounded bg-[#222222]">
            <h2 className="flex h-[61px] items-center px-[25px] pb-1 text-[22px] text-[#e6e6e6]">Statistics</h2>
            <InfoTable rows={stats} />
          </section>
          <section className="rounded bg-[#222222]">
            <h2 className="flex h-[61px] items-center px-[25px] pb-1 text-[22px] text-[#e6e6e6]">Account Details</h2>
            <InfoTable rows={details} />
            <div className="px-2 pt-6 pb-[7px] text-[#d6d6d6]">
              <p className="leading-5">Home Directory:</p>
              <button
                type="button"
                className="mt-5 h-[34px] rounded-sm border border-[#ff4a00] bg-[#ff6c2c] px-3 text-sm font-medium text-white"
              >
                More account settings
              </button>
            </div>
          </section>
        </aside>
      </div>

      <footer className="mt-[70px] flex items-center gap-[9px] pb-[14px] pl-[158px] text-[11px] leading-5 text-[#dcdcdc]">
        <a href="#" aria-label="cPanel">
          <SiCpanel viewBox="0 9.350 24 5.300" className="h-5 w-[90px] text-[#ff6c2c]" />
        </a>
        <p>cPanel, Inc. © 2016 All Rights Reserved / v.58.0.31</p>
      </footer>
    </div>
  );
}
